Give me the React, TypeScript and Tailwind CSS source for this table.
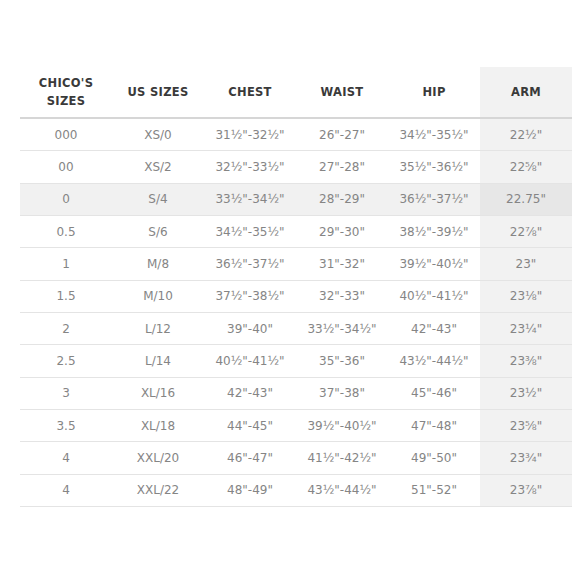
import type { ReactNode } from 'react';

type Row = [string, string, string, string, string, string];

const rows: Row[] = [
  ['000', 'XS/0', '31½"-32½"', '26"-27"', '34½"-35½"', '22½"'],
  ['00', 'XS/2', '32½"-33½"', '27"-28"', '35½"-36½"', '22⅝"'],
  ['0', 'S/4', '33½"-34½"', '28"-29"', '36½"-37½"', '22.75"'],
  ['0.5', 'S/6', '34½"-35½"', '29"-30"', '38½"-39½"', '22⅞"'],
  ['1', 'M/8', '36½"-37½"', '31"-32"', '39½"-40½"', '23"'],
  ['1.5', 'M/10', '37½"-38½"', '32"-33"', '40½"-41½"', '23⅛"'],
  ['2', 'L/12', '39"-40"', '33½"-34½"', '42"-43"', '23¼"'],
  ['2.5', 'L/14', '40½"-41½"', '35"-36"', '43½"-44½"', '23⅜"'],
  ['3', 'XL/16', '42"-43"', '37"-38"', '45"-46"', '23½"'],
  ['3.5', 'XL/18', '44"-45"', '39½"-40½"', '47"-48"', '23⅝"'],
  ['4', 'XXL/20', '46"-47"', '41½"-42½"', '49"-50"', '23¾"'],
  ['4', 'XXL/22', '48"-49"', '43½"-44½"', '51"-52"', '23⅞"'],
];

function Head({ children, arm }: { children: ReactNode; arm?: boolean }) {
  return (
    <div
      className={`flex h-[50px] items-center justify-center text-center text-[11.5px] font-bold leading-[18px] tracking-[0.3px] text-[#3a3a3a] ${
        arm ? 'bg-[#f2f2f2]' : ''
      }`}
    >
      {children}
    </div>
  );
}

export default function App() {
  return (
    <div className="min-h-[580px] w-[580px] bg-white pt-[67px] pl-[20px] font-['DejaVu_Sans',sans-serif]">
      <div className="w-[552px]">
        <div className="grid grid-cols-6 border-b-2 border-[#d6d6d6]">
          <Head>
            CHICO'S
            <br />
            SIZES
          </Head>
          <Head>US SIZES</Head>
          <Head>CHEST</Head>
          <Head>WAIST</Head>
          <Head>HIP</Head>
          <Head arm>ARM</Head>
        </div>
        {rows.map((r, i) => {
          const hl = i === 2;
          return (
            <div
              key={i}
              className={`grid h-[32.33px] grid-cols-6 border-b border-[#e4e4e4] text-[12px] text-[#858585] ${
                hl ? 'bg-[#f1f1f1]' : ''
              }`}
            >
              {r.map((c, j) => (
                <div
                  key={j}
                  className={`flex items-center justify-center whitespace-nowrap ${
                    j === 5 ? (hl ? 'bg-[#e7e7e7]' : 'bg-[#f2f2f2]') : ''
                  }`}
                >
                  {c}
                </div>
              ))}
            </div>
          );
        })}
      </div>
    </div>
  );
}
